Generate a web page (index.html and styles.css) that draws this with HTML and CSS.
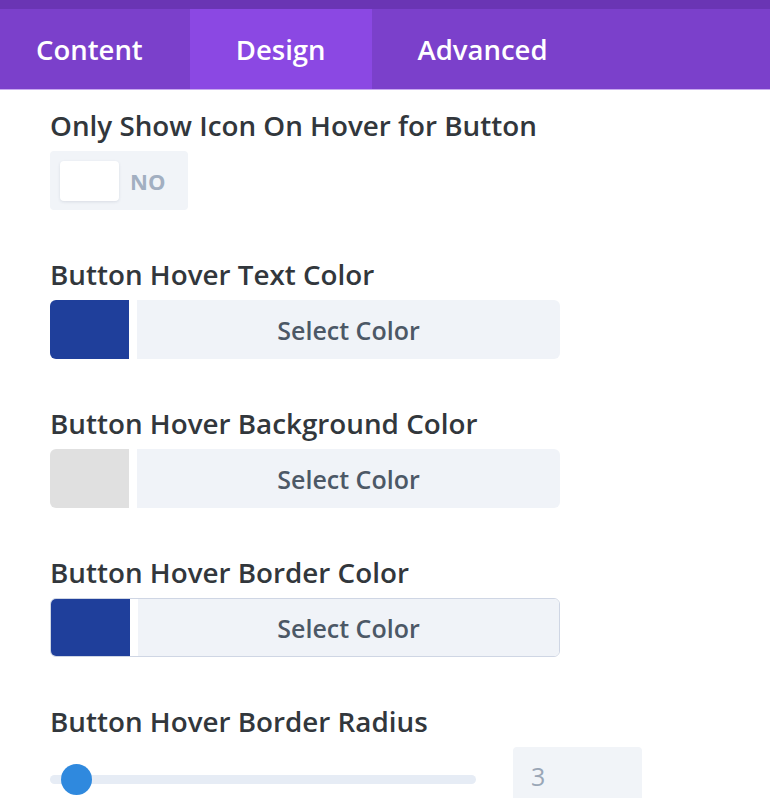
FILE: index.html
```html
<!DOCTYPE html>
<html>
<head>
<meta charset="utf-8">
<link rel="stylesheet" href="styles.css">
</head>
<body>
<div class="topstrip"></div>
<nav class="tabs">
  <div class="tab">Content</div>
  <div class="tab active">Design</div>
  <div class="tab">Advanced</div>
</nav>
<main class="panel">
  <section class="field">
    <div class="label">Only Show Icon On Hover for Button</div>
    <div class="toggle"><span class="knob"></span><span class="toggle-text">NO</span></div>
  </section>
  <section class="field">
    <div class="label">Button Hover Text Color</div>
    <div class="picker"><span class="swatch blue"></span><span class="select">Select Color</span></div>
  </section>
  <section class="field">
    <div class="label">Button Hover Background Color</div>
    <div class="picker"><span class="swatch grey"></span><span class="select">Select Color</span></div>
  </section>
  <section class="field">
    <div class="label">Button Hover Border Color</div>
    <div class="picker bordered"><span class="swatch blue"></span><span class="select">Select Color</span></div>
  </section>
  <section class="field">
    <div class="label">Button Hover Border Radius</div>
    <div class="range-row">
      <div class="track"><span class="thumb"></span></div>
      <div class="num">3</div>
    </div>
  </section>
</main>
</body>
</html>
```
FILE: styles.css
```css
html, body {
  margin: 0;
  padding: 0;
  background: #ffffff;
  font-family: "Open Sans", "Noto Sans", sans-serif;
  overflow: hidden;
}
.topstrip {
  height: 9px;
  background: #6a35b4;
}
.tabs {
  display: flex;
  height: 80px;
  background: #7b40cb;
  border-bottom: 1px solid #c8a9ef;
}
.tab {
  color: #ffffff;
  font-size: 27.5px;
  font-weight: 600;
  display: flex;
  align-items: center;
  padding: 0 46px;
}
.tab:first-child { padding: 0 47px 0 36px; }
.tab.active {
  background: #8b48e3;
}
.panel {
  padding: 0 50px;
}
.field {
  padding-top: 19px;
  padding-bottom: 27px;
}
.field + .field { padding-top: 21px; }
.label {
  color: #32373c;
  font-size: 27.8px;
  font-weight: 600;
  line-height: 32px;
  margin-bottom: 10px;
}
.toggle {
  display: flex;
  align-items: center;
  width: 138px;
  height: 59px;
  background: #f1f4f8;
  border-radius: 4px;
  box-sizing: border-box;
  padding-left: 10px;
}
.knob {
  width: 59px;
  height: 40px;
  background: #ffffff;
  border-radius: 4px;
  box-shadow: 0 1px 3px rgba(40, 60, 90, 0.12);
}
.toggle-text {
  margin-left: 11px;
  color: #a2afc1;
  font-size: 22px;
  font-weight: 700;
}
.picker {
  display: flex;
  width: 510px;
  height: 59px;
  box-sizing: border-box;
  border-radius: 6px;
  overflow: hidden;
}
.picker.bordered {
  border: 1px solid #cfd6e4;
}
.swatch {
  width: 79px;
  flex: none;
  border-right: 8px solid #ffffff;
}
.swatch.blue { background: #1f3f9b; }
.swatch.grey { background: #e0e0e0; }
.select {
  flex: 1;
  display: flex;
  align-items: center;
  justify-content: center;
  background: #f0f3f8;
  color: #4c5866;
  font-size: 25px;
  font-weight: 600;
}
.range-row {
  display: flex;
  align-items: flex-start;
  gap: 37px;
  margin-top: 1px;
}
.track {
  position: relative;
  width: 426px;
  height: 9px;
  margin-top: 28px;
  background: #e6ecf5;
  border-radius: 5px;
}
.thumb {
  position: absolute;
  left: 11px;
  top: -11px;
  width: 31px;
  height: 31px;
  border-radius: 50%;
  background: #2f89de;
}
.num {
  width: 129px;
  height: 60px;
  background: #f1f4f8;
  border-radius: 4px;
  box-sizing: border-box;
  padding: 12px 0 0 18px;
  color: #9aa6b6;
  font-size: 25px;
  font-weight: 400;
}
```
